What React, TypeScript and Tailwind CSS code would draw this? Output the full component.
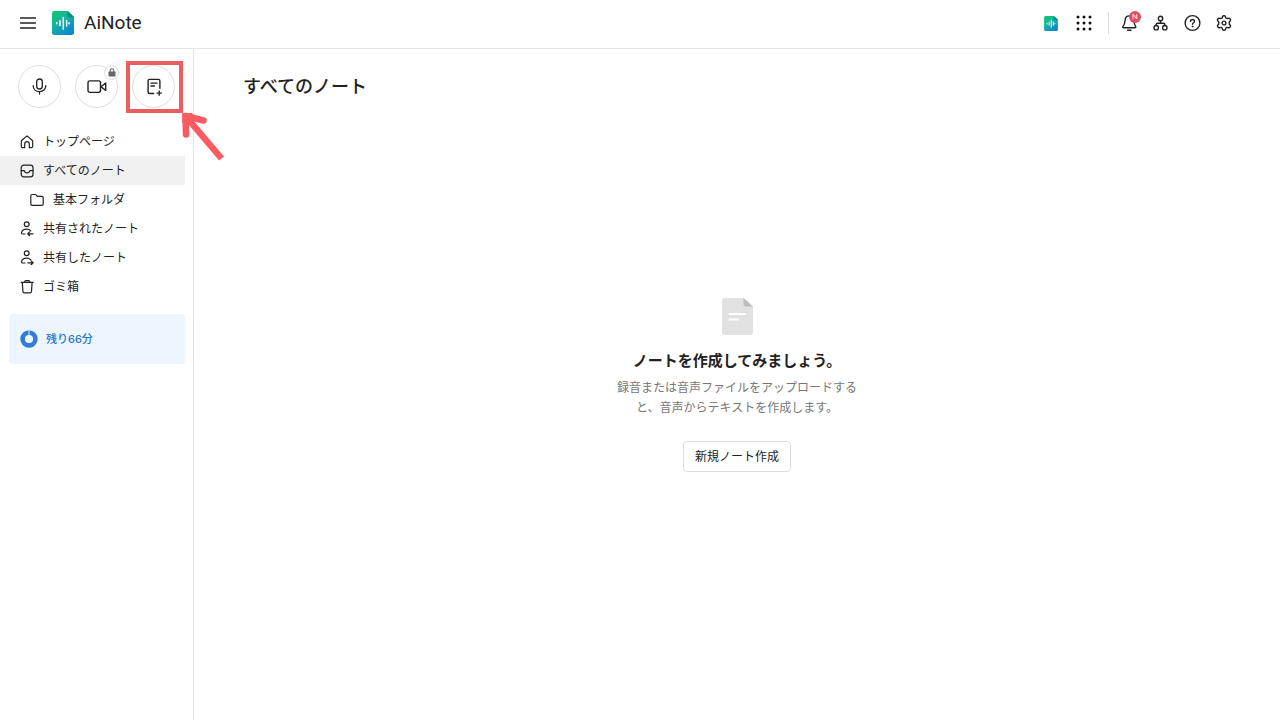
import React from "react";

type IconProps = { children: React.ReactNode; size?: number; className?: string };

function Icon({ children, size = 16, className = "" }: IconProps) {
  return (
    <svg
      aria-hidden="true"
      width={size}
      height={size}
      viewBox={`0 0 ${size} ${size}`}
      fill="none"
      stroke="currentColor"
      strokeWidth="1.2"
      strokeLinecap="round"
      strokeLinejoin="round"
      className={`shrink-0 ${className}`}
    >
      {children}
    </svg>
  );
}

function Logo({ id, className }: { id: string; className: string }) {
  return (
    <svg aria-hidden="true" viewBox="0 0 22 24" className={className}>
      <defs>
        <linearGradient id={id} x1="0" y1="0" x2="0.7" y2="1">
          <stop offset="0" stopColor="#10c96c" />
          <stop offset="0.5" stopColor="#12b2a2" />
          <stop offset="1" stopColor="#0d84d2" />
        </linearGradient>
      </defs>
      <path
        d="M2.200 0h12.600c.6 0 1.100.2 1.500.6l5 4.700c.5.4.7.9.7 1.500V21.800A2.200 2.200 0 0 1 19.800 24H2.200A2.200 2.200 0 0 1 0 21.800V2.200A2.200 2.200 0 0 1 2.200 0Z"
        fill={`url(#${id})`}
      />
      <path d="M15.200.1c.4.1.8.2 1.100.5l5 4.700c.3.300.500.700.600 1.100h-4.500a2.200 2.200 0 0 1-2.200-2.200Z" fill="#0b8f7c" />
      <path
        d="M4.900 11.600v1.200M8.200 9.800v4.800M11.500 6.600v11.600M14.800 9.600v5.400M17.200 11.700v1"
        transform="translate(-.2 0)"
        stroke="#fff"
        strokeWidth="1.500"
        strokeLinecap="round"
      />
    </svg>
  );
}

const navItems = [
  {
    label: "トップページ",
    icon: (
      <Icon>
        <path d="M2.300 6.800 8 1.900l5.700 4.900v5.400a1.500 1.500 0 0 1-1.500 1.500h-1.900V9.900a2.300 2.300 0 0 0-4.600 0v3.800H3.800a1.500 1.500 0 0 1-1.500-1.500Z" />
      </Icon>
    ),
  },
  {
    label: "すべてのノート",
    active: true,
    icon: (
      <Icon>
        <rect x="2.200" y="2.200" width="11.800" height="11.600" rx="2.600" />
        <path d="M2.200 7.600h3.100c.4 1.600 1.400 2.300 2.800 2.300s2.400-.7 2.800-2.300H14" />
      </Icon>
    ),
  },
  {
    label: "基本フォルダ",
    nested: true,
    icon: (
      <Icon>
        <path d="M1.800 3.800c0-.8.5-1.300 1.300-1.300h3.200c.5 0 .8.2 1.100.6l.9 1.200h4.600c.8 0 1.300.5 1.300 1.300v6.500c0 .8-.5 1.300-1.300 1.300H3.100c-.8 0-1.300-.5-1.300-1.300Z" />
      </Icon>
    ),
  },
  {
    label: "共有されたノート",
    icon: (
      <Icon>
        <circle cx="7.700" cy="3.300" r="2.400" />
        <path d="M6 13H3.900c-1.100 0-1.600-.6-1.400-1.400.5-2.200 2.400-3.400 5.100-3.400 1.900 0 3.300.6 4.200 1.600M14 12.800H8.800M10.700 10.900l-2 1.900 2 1.900" />
      </Icon>
    ),
  },
  {
    label: "共有したノート",
    icon: (
      <Icon>
        <circle cx="7.700" cy="3.300" r="2.400" />
        <path d="M6 13H3.900c-1.100 0-1.600-.6-1.400-1.400.5-2.200 2.400-3.400 5.100-3.400 1.900 0 3.300.6 4.200 1.600M8.800 12.800H14M12.100 10.900l2 1.900-2 1.900" />
      </Icon>
    ),
  },
  {
    label: "ゴミ箱",
    icon: (
      <Icon>
        <path d="M2.200 3.400h12M5.700 3.300V2.700c0-.7.4-1.100 1.100-1.100h2.800c.7 0 1.100.4 1.100 1.100v.6M3.300 3.500l.6 8.900c.1.900.6 1.400 1.500 1.400H11c.9 0 1.400-.5 1.500-1.400l.6-8.900" />
      </Icon>
    ),
  },
];

const roundButton =
  "relative flex size-[43px] items-center justify-center rounded-full border border-[#dedede] bg-white";

function Header() {
  return (
    <header className="flex h-[49px] items-center border-b border-[#e4e4e4] pr-12 pl-5 pb-[2px]">
      <button type="button" aria-label="メニュー" className="flex">
        <Icon size={16}>
          <path d="M.7 3h14.600M.7 8h14.600M.7 13h14.600" strokeWidth="1.600" />
        </Icon>
      </button>
      <a href="#" className="ml-4 flex items-center gap-[10px]">
        <Logo id="logo-large" className="h-6 w-[22px]" />
        <span className="font-['Roboto',sans-serif] text-[19px] leading-6 text-[#222]">AiNote</span>
      </a>
      <div className="ml-auto flex items-center">
        <a href="#" aria-label="AiNote" className="mr-[18px]">
          <Logo id="logo-small" className="h-[15px] w-[14px]" />
        </a>
        <button type="button" aria-label="サービス一覧" className="mr-4">
          <svg aria-hidden="true" width="16" height="16" viewBox="0 0 16 16" fill="#111">
            {[2, 8, 14].map((y) => [2, 8, 14].map((x) => <circle key={`${x}-${y}`} cx={x} cy={y} r="1.500" />))}
          </svg>
        </button>
        <span className="mr-3 h-[22px] w-px bg-[#dcdcdc]" />
        <div className="flex items-center gap-[15px]">
          <button type="button" aria-label="お知らせ" className="relative">
            <Icon size={16}>
              <path
                d="M8.500.9C5.800.9 4.100 2.900 4 5.500c-.1 2.900-.7 4.300-2 5.900-.6.700-.2 1.400.7 1.400h11.100c.9 0 1.300-.7.800-1.400-1.100-1.500-1.500-3-1.600-5.900C12.900 2.900 11.200.9 8.500.9ZM6.600 15.200h3.400"
                strokeWidth="1.400"
              />
            </Icon>
            <span className="absolute -top-1 left-2 flex size-3 items-center justify-center rounded-full bg-[#e2505c] font-['Liberation_Sans',sans-serif] text-[8px] leading-none text-white">
              N
            </span>
          </button>
          <button type="button" aria-label="組織図">
            <Icon size={16}>
              <g strokeWidth="1.400">
                <circle cx="8.500" cy="3.500" r="2.200" />
                <circle cx="4.200" cy="12.700" r="2.200" />
                <circle cx="12.800" cy="12.700" r="2.200" />
                <path d="M8.500 5.800v2.400M4.200 10.400V9.600c0-.9.500-1.400 1.400-1.400h5.800c.9 0 1.400.500 1.400 1.400v.8" />
              </g>
            </Icon>
          </button>
          <button type="button" aria-label="ヘルプ">
            <Icon size={18}>
              <circle cx="9.500" cy="9" r="7.400" strokeWidth="1.400" />
              <path d="M7.500 7.400c0-1.200.8-1.900 2-1.900s2 .7 2 1.800c0 1.400-2 1.500-2 3" strokeWidth="1.400" />
              <circle cx="9.500" cy="12.500" r=".5" fill="currentColor" strokeWidth=".8" />
            </Icon>
          </button>
          <button type="button" aria-label="設定">
            <Icon size={16}>
              <path
                d="M6.600 1.500c.2-.6.6-.8 1.400-.8s1.200.2 1.400.8l.5 1.500 1.100.6 1.600-.3c.6-.1 1.100.1 1.600.8s.5 1.200.1 1.700L13.200 6.900v2.200l1.100 1.100c.4.500.3 1-.1 1.700s-1 .9-1.600.8l-1.600-.3-1.100.6-.5 1.500c-.2.600-.6.800-1.400.8s-1.200-.2-1.400-.8L6.100 13 5 12.400l-1.600.3c-.6.1-1.200-.1-1.600-.8s-.5-1.200-.1-1.700L2.800 9.100V6.900L1.700 5.800c-.4-.5-.3-1 .1-1.700s1-.9 1.600-.8l1.600.3L6.100 3Z"
                strokeWidth="1.400"
              />
              <circle cx="8" cy="8" r="1.900" strokeWidth="1.400" />
            </Icon>
          </button>
        </div>
      </div>
    </header>
  );
}

function Sidebar() {
  return (
    <aside className="w-[194px] shrink-0 border-r border-[#e4e4e4] pt-4">
      <div className="flex gap-[14px] pl-[18px]">
        <button type="button" aria-label="録音" className={roundButton}>
          <Icon size={18}>
            <rect x="5.700" y="1" width="5.600" height="10" rx="2.800" strokeWidth="1.300" />
            <path d="M2.200 7.700c0 3.600 2.600 5.900 6.300 5.900s6.300-2.300 6.300-5.900M8.500 13.700v2.400" strokeWidth="1.300" />
          </Icon>
        </button>
        <button type="button" aria-label="ビデオ会議" className={roundButton}>
          <Icon size={20}>
            <rect x="1" y="3.900" width="12.500" height="11.500" rx="1.800" strokeWidth="1.400" />
            <path d="m14 9.700 4.700-3.700v7.400Z" strokeWidth="1.400" />
          </Icon>
          <span className="absolute -top-px -right-[2px] flex size-[15px] items-center justify-center rounded-full border border-[#dedede] bg-white">
            <svg aria-hidden="true" width="8" height="9" viewBox="0 0 8 9" fill="none">
              <path d="M2.200 4V2.500a1.800 1.800 0 0 1 3.600 0V4" stroke="#666" strokeWidth="1.100" />
              <rect x=".5" y="3.600" width="7" height="4.900" rx=".6" fill="#666" />
            </svg>
          </span>
        </button>
        <button type="button" aria-label="ノート作成" className={roundButton}>
          <Icon size={18}>
            <path
              d="M8.700 15.500H4.600c-1 0-1.500-.5-1.500-1.500V2.900c0-1 .5-1.500 1.500-1.500h8.800c1 0 1.500.5 1.500 1.500v7.300M5.900 5.100h6.200M5.900 8h3.600"
              strokeWidth="1.400"
            />
            <path d="M14.200 12.900v4.400M12 15.100h4.400" strokeWidth="1.300" />
          </Icon>
          <span className="pointer-events-none absolute -top-[5px] -left-[7px] h-[52px] w-[57px] border-4 border-[#ec5d60]" />
          <svg
            aria-hidden="true"
            className="pointer-events-none absolute top-[44px] left-[46px]"
            width="50"
            height="54"
            viewBox="0 0 50 54"
          >
            <path d="M9 9 42.500 48.500" fill="none" stroke="#fa5b60" strokeWidth="6.500" />
            <path d="M24.500 10.500 6.500 6 7 24.500" fill="none" stroke="#fa5b60" strokeWidth="6.500" strokeLinecap="round" strokeLinejoin="round" />
            <path d="M3.300 3h10v10h-10Z" fill="#fa5b60" />
          </svg>
        </button>
      </div>

      <nav className="mt-[19px] mr-2">
        <ul>
          {navItems.map((item) => (
            <li key={item.label}>
              <a
                href="#"
                aria-current={item.active ? "page" : undefined}
                className={`flex h-[29px] items-center gap-2 text-xs text-[#222] ${item.active ? "bg-[#f1f1f1]" : ""} ${
                  item.nested ? "pl-[29px]" : "pl-[19px]"
                }`}
              >
                {item.icon}
                <span>{item.label}</span>
              </a>
            </li>
          ))}
        </ul>
      </nav>

      <div className="mt-[13px] mr-2 ml-[9px] flex h-[50px] items-center gap-2 rounded-[4px] bg-[#edf5ff] pl-[11px] text-[11px] font-medium text-[#2b79c9]">
        <svg aria-hidden="true" width="18" height="18" viewBox="0 0 18 18" fill="none">
          <circle cx="9" cy="9" r="6.400" stroke="#347bd6" strokeWidth="4.600" />
          <path d="M9 0v5" stroke="#c5dcf7" strokeWidth="1.200" />
        </svg>
        <span>残り66分</span>
      </div>
    </aside>
  );
}

export default function App() {
  return (
    <div className="flex min-h-screen flex-col bg-white font-['Inter','Noto_Sans_CJK_JP',sans-serif] text-[#222]">
      <Header />
      <div className="flex flex-1">
        <Sidebar />
        <main className="flex min-w-0 flex-1 flex-col">
          <h1 className="px-[49px] pt-6 text-lg leading-7 font-medium">すべてのノート</h1>
          <section className="mt-[197px] flex flex-col items-center text-center">
            <svg aria-hidden="true" width="31" height="37" viewBox="0 0 31 37">
              <path d="M3 0h18.500L31 8.500V34a3 3 0 0 1-3 3H3a3 3 0 0 1-3-3V3a3 3 0 0 1 3-3Z" fill="#e1e1e1" />
              <path d="M21.500 0 31 8.500h-7a2.500 2.500 0 0 1-2.500-2.500Z" fill="#bdbdbd" />
              <path d="M6.500 16h17.500M6.500 21.500H17" stroke="#fff" strokeWidth="2" />
            </svg>
            <h2 className="mt-[14px] text-[15px] leading-6 font-bold">ノートを作成してみましょう。</h2>
            <p className="mt-[5px] text-xs leading-5 text-[#777]">
              録音または音声ファイルをアップロードする
              <br />
              と、音声からテキストを作成します。
            </p>
            <button
              type="button"
              className="mt-[23px] h-[31px] rounded-[4px] border border-[#dedede] bg-white px-[11px] text-xs"
            >
              新規ノート作成
            </button>
          </section>
        </main>
      </div>
    </div>
  );
}
